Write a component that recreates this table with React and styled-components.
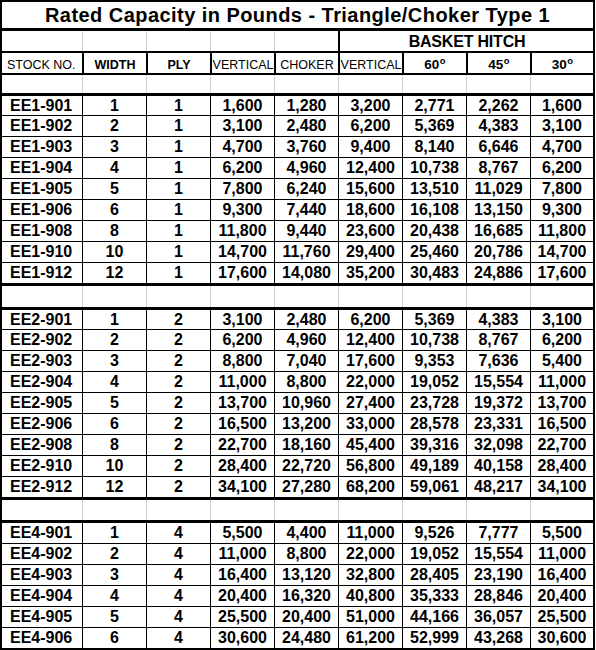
import React from "react";
import styled, { createGlobalStyle } from "styled-components";

const GlobalStyle = createGlobalStyle`
  body {
    margin: 0;
    background: #ffffff;
    font-family: "Liberation Sans", Arial, sans-serif;
    color: #000000;
  }
`;

const COLUMNS = "80px repeat(7, 64px) 63px";
const GRID_GRAY = "#d4d4d4";

const Sheet = styled.div`
  width: 591px;
  border: 2px solid #000;
`;

const TitleRow = styled.div`
  height: 26px;
  border-bottom: 3px solid #000;
  display: flex;
  align-items: center;
  justify-content: center;
  font-size: 20px;
  font-weight: bold;
  letter-spacing: 0.45px;
`;

const Row = styled.div`
  display: grid;
  grid-template-columns: ${COLUMNS};
  height: ${(p) => p.$h}px;
  border-bottom: ${(p) => p.$bb}px solid #000;
`;

const Cell = styled.div`
  box-sizing: border-box;
  display: flex;
  align-items: center;
  justify-content: ${(p) => (p.$left ? "flex-start" : "center")};
  padding-left: ${(p) => (p.$left ? "8px" : "0")};
  border-left: ${(p) => p.$sep || "none"};
  grid-column: ${(p) => (p.$span ? `span ${p.$span}` : "auto")};
  font-size: 16px;
  font-weight: bold;
  white-space: nowrap;
  overflow: hidden;
`;

const HeadCell = styled(Cell)`
  font-size: ${(p) => (p.$angle ? "13.5px" : "12.5px")};
  font-weight: ${(p) => (p.$bold ? "bold" : "normal")};
  padding-left: ${(p) => (p.$left ? "5px" : "0")};
  padding-top: 3px;
`;

const GroupCell = styled(Cell)`
  padding-left: 1px;
  padding-top: 1px;
  letter-spacing: -0.2px;
`;

const Deg = styled.span`
  font-size: 9.5px;
  font-weight: bold;
  position: relative;
  top: -4px;
  margin-left: 0.5px;
`;

const thin = "1px solid #000";
const thick = "2px solid #000";
const grid = `1px solid ${GRID_GRAY}`;

const sections = [
  {
    blank: 21,
    first: 19,
    rows: [
      ["EE1-901", "1", "1", "1,600", "1,280", "3,200", "2,771", "2,262", "1,600"],
      ["EE1-902", "2", "1", "3,100", "2,480", "6,200", "5,369", "4,383", "3,100"],
      ["EE1-903", "3", "1", "4,700", "3,760", "9,400", "8,140", "6,646", "4,700"],
      ["EE1-904", "4", "1", "6,200", "4,960", "12,400", "10,738", "8,767", "6,200"],
      ["EE1-905", "5", "1", "7,800", "6,240", "15,600", "13,510", "11,029", "7,800"],
      ["EE1-906", "6", "1", "9,300", "7,440", "18,600", "16,108", "13,150", "9,300"],
      ["EE1-908", "8", "1", "11,800", "9,440", "23,600", "20,438", "16,685", "11,800"],
      ["EE1-910", "10", "1", "14,700", "11,760", "29,400", "25,460", "20,786", "14,700"],
      ["EE1-912", "12", "1", "17,600", "14,080", "35,200", "30,483", "24,886", "17,600"],
    ],
  },
  {
    blank: 20,
    first: 19,
    rows: [
      ["EE2-901", "1", "2", "3,100", "2,480", "6,200", "5,369", "4,383", "3,100"],
      ["EE2-902", "2", "2", "6,200", "4,960", "12,400", "10,738", "8,767", "6,200"],
      ["EE2-903", "3", "2", "8,800", "7,040", "17,600", "9,353", "7,636", "5,400"],
      ["EE2-904", "4", "2", "11,000", "8,800", "22,000", "19,052", "15,554", "11,000"],
      ["EE2-905", "5", "2", "13,700", "10,960", "27,400", "23,728", "19,372", "13,700"],
      ["EE2-906", "6", "2", "16,500", "13,200", "33,000", "28,578", "23,331", "16,500"],
      ["EE2-908", "8", "2", "22,700", "18,160", "45,400", "39,316", "32,098", "22,700"],
      ["EE2-910", "10", "2", "28,400", "22,720", "56,800", "49,189", "40,158", "28,400"],
      ["EE2-912", "12", "2", "34,100", "27,280", "68,200", "59,061", "48,217", "34,100"],
    ],
  },
  {
    blank: null,
    first: 20,
    rows: [
      ["EE4-901", "1", "4", "5,500", "4,400", "11,000", "9,526", "7,777", "5,500"],
      ["EE4-902", "2", "4", "11,000", "8,800", "22,000", "19,052", "15,554", "11,000"],
      ["EE4-903", "3", "4", "16,400", "13,120", "32,800", "28,405", "23,190", "16,400"],
      ["EE4-904", "4", "4", "20,400", "16,320", "40,800", "35,333", "28,846", "20,400"],
      ["EE4-905", "5", "4", "25,500", "20,400", "51,000", "44,166", "36,057", "25,500"],
      ["EE4-906", "6", "4", "30,600", "24,480", "61,200", "52,999", "43,268", "30,600"],
    ],
  },
];

const BlankRow = ({ h }) => (
  <Row $h={h} $bb={3}>
    {Array.from({ length: 9 }).map((_, i) => (
      <Cell key={i} $sep={i === 0 ? null : grid} />
    ))}
  </Row>
);

const Angle = ({ value }) => (
  <>
    {value}
    <Deg>o</Deg>
  </>
);

const App = () => {
  return (
    <>
      <GlobalStyle />
      <Sheet>
        <TitleRow>Rated Capacity in Pounds - Triangle/Choker Type 1</TitleRow>

        <Row $h={20} $bb={2}>
          <Cell />
          <Cell $sep={grid} />
          <Cell $sep={grid} />
          <Cell $sep={grid} />
          <Cell $sep={grid} />
          <GroupCell $span={4} $sep={thick}>
            BASKET HITCH
          </GroupCell>
        </Row>

        <Row $h={20} $bb={2}>
          <HeadCell $left>STOCK NO.</HeadCell>
          <HeadCell $sep={thick} $bold>WIDTH</HeadCell>
          <HeadCell $sep={thick} $bold>PLY</HeadCell>
          <HeadCell $sep={thick}>VERTICAL</HeadCell>
          <HeadCell $sep={thick}>CHOKER</HeadCell>
          <HeadCell $sep={thick}>VERTICAL</HeadCell>
          <HeadCell $sep={thick} $bold $angle><Angle value="60" /></HeadCell>
          <HeadCell $sep={thick} $bold $angle><Angle value="45" /></HeadCell>
          <HeadCell $sep={thick} $bold $angle><Angle value="30" /></HeadCell>
        </Row>

        <BlankRow h={18} />

        {sections.map((section, si) => (
          <React.Fragment key={si}>
            {section.rows.map((row, ri) => {
              const last = ri === section.rows.length - 1;
              const h = ri === 0 ? section.first : 20;
              const bb = last ? (section.blank ? 3 : 0) : 1;
              return (
                <Row key={row[0]} $h={h} $bb={bb}>
                  {row.map((value, ci) => (
                    <Cell key={ci} $left={ci === 0} $sep={ci === 0 ? null : thin}>
                      {value}
                    </Cell>
                  ))}
                </Row>
              );
            })}
            {section.blank && <BlankRow h={section.blank} />}
          </React.Fragment>
        ))}
      </Sheet>
    </>
  );
};

export default App;
